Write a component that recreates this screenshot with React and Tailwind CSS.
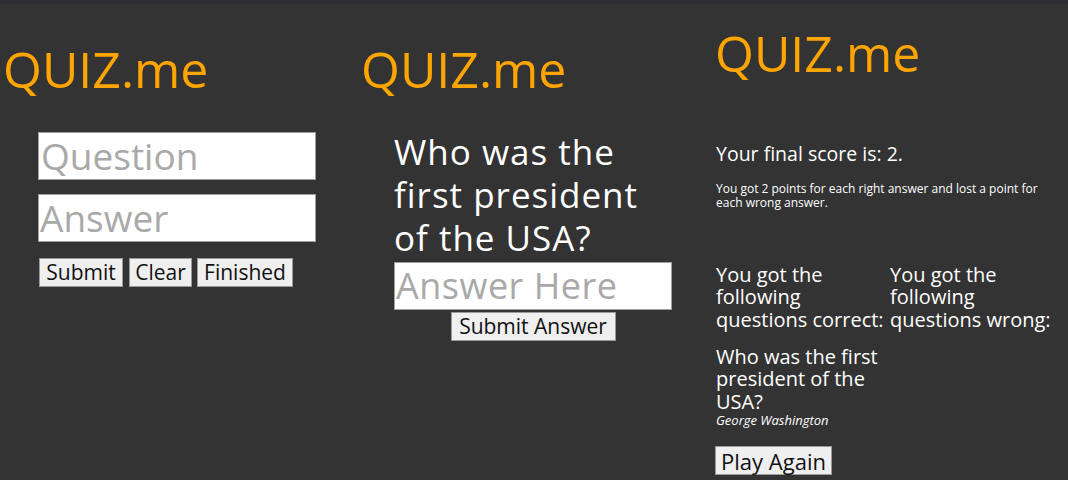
export default function App() {
  const font = "font-['Open_Sans',sans-serif]";
  const btn =
    "h-[29px] bg-[#efefef] border border-[#9a9a9a] text-[#111] text-[21px] leading-none flex items-center justify-center " + font;
  const title = "text-[#ffa500] text-[50px] leading-none h-[53px] " + font;
  const input =
    "w-[278px] h-[48px] bg-white border border-[#a0a0a0] text-black placeholder:text-[#a9a9a9] outline-none " + font;
  return (
    <div className={"w-[1068px] h-[480px] bg-[#333333] overflow-hidden flex flex-col " + font}>
      <div className="h-[4px] bg-[#2b2c35] shrink-0" />
      <div className="flex flex-1">
        {/* Panel 1 */}
        <div className="w-[350px] flex flex-col">
          <h1 className={title + " mt-[40px] pl-[3px]"}>QUIZ.me</h1>
          <div className="ml-[38px] mt-[35px] flex flex-col">
            <input placeholder="Question" className={input + " pl-[2px] text-[37px]"} />
            <input placeholder="Answer" className={input + " mt-[14px] pl-[1px] text-[37px]"} />
            <div className="mt-[16px] ml-[1px] flex">
              <button className={btn + " w-[84px]"}>Submit</button>
              <button className={btn + " w-[63px] ml-[6px]"}>Clear</button>
              <button className={btn + " w-[96px] ml-[5px]"}>Finished</button>
            </div>
          </div>
        </div>

        {/* Panel 2 */}
        <div className="w-[348px] flex flex-col">
          <h1 className={title + " mt-[40px] pl-[11px]"}>QUIZ.me</h1>
          <div className="ml-[44px] w-[278px] flex flex-col items-center">
            <p className="self-stretch mt-[33px] text-white text-[35px] tracking-[1px] leading-[43px]">
              Who was the
              <br />
              first president
              <br />
              of the USA?
            </p>
            <input
              placeholder="Answer Here"
              className={input + " mt-[3px] pl-[1px] text-[36px] tracking-[0.5px]"}
            />
            <button className={btn + " w-[165px] mt-[2px]"}>Submit Answer</button>
          </div>
        </div>

        {/* Panel 3 */}
        <div className="w-[370px] flex flex-col pl-[18px] text-white">
          <h1 className={title + " mt-[24px] -ml-[1px]"}>QUIZ.me</h1>
          <h3 className="mt-[61px] text-[19.5px] leading-[24px]">Your final score is: 2.</h3>
          <p className="mt-[16px] text-[12px] leading-[14px] w-[336px]">
            You got 2 points for each right answer and lost a point for each wrong answer.
          </p>
          <div className="mt-[53.5px] grid grid-cols-[174px_1fr] text-[20px] leading-[22.5px]">
            <div>
              <p>
                You got the
                <br />
                following
                <br />
                questions correct:
              </p>
              <p className="mt-[14.5px]">
                Who was the first
                <br />
                president of the
                <br />
                USA?
              </p>
              <p className="text-[13px] leading-[14px] italic -mt-[0.5px]">George Washington</p>
            </div>
            <div>
              <p>
                You got the
                <br />
                following
                <br />
                questions wrong:
              </p>
            </div>
          </div>
          <button className={btn + " w-[117px] mt-[19.5px] -ml-[1px] text-[22px]"}>Play Again</button>
        </div>
      </div>
    </div>
  );
}
